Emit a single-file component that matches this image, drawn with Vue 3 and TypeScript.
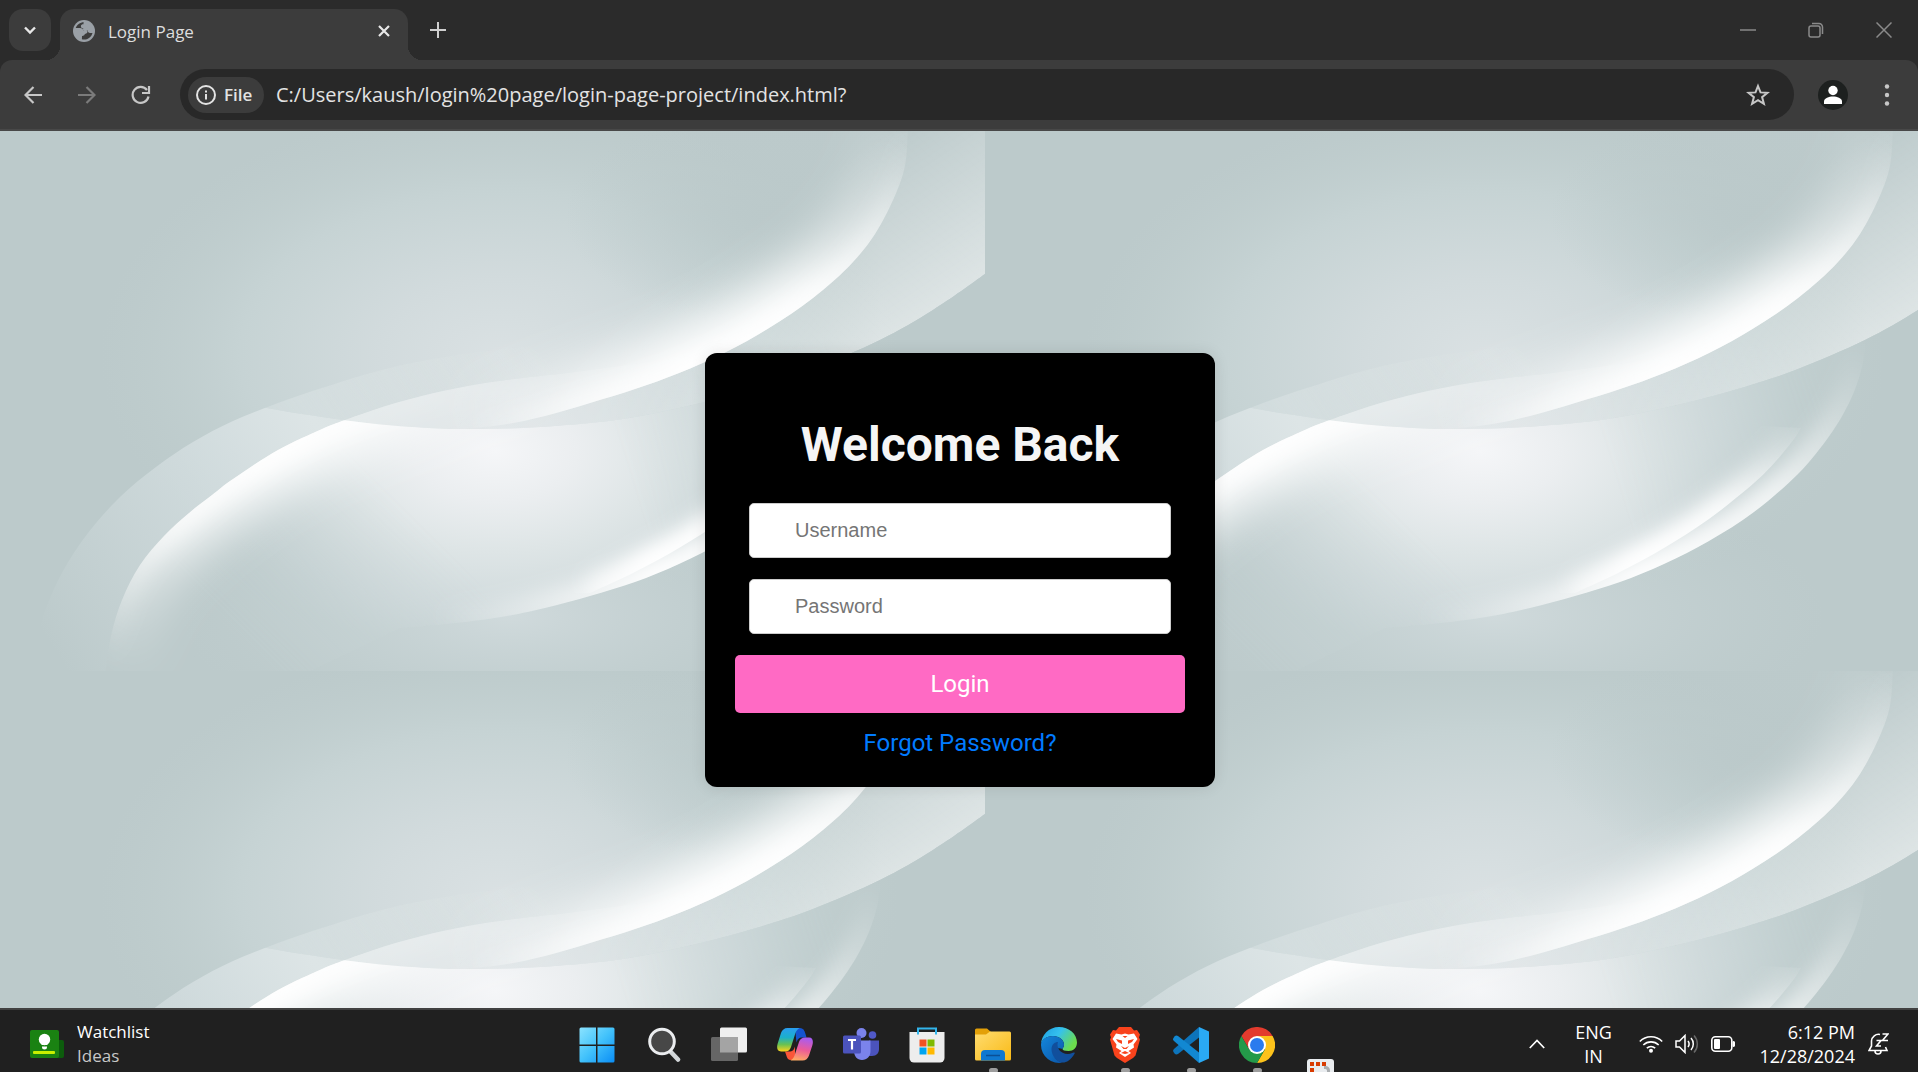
<script setup lang="ts">
import { ref } from 'vue'

type Point = [number, number]

const username = ref('')
const password = ref('')

/** Smooth cubic path through a list of points. */
function curve(points: Point[], start = 'M'): string {
  let d = `${start}${points[0][0]} ${points[0][1]}`
  for (let i = 0; i < points.length - 1; i++) {
    const before = points[Math.max(i - 1, 0)]
    const from = points[i]
    const to = points[i + 1]
    const after = points[Math.min(i + 2, points.length - 1)]
    const c1 = [from[0] + (to[0] - before[0]) / 6, from[1] + (to[1] - before[1]) / 6]
    const c2 = [to[0] - (after[0] - from[0]) / 6, to[1] - (after[1] - from[1]) / 6]
    d += `C${c1[0].toFixed(1)} ${c1[1].toFixed(1)} ${c2[0].toFixed(1)} ${c2[1].toFixed(1)} ${to[0]} ${to[1]}`
  }
  return d
}

const crest: Point[] = [[909, -30], [908, 0], [903, 43], [881, 93], [853, 131], [813, 167], [769, 197], [724, 222], [679, 242], [635, 258], [590, 272], [545, 285], [501, 294], [440, 300]]
const swell: Point[] = [[1000, 131], [985, 143], [933, 179], [880, 209], [813, 238], [769, 253], [724, 266], [679, 277], [635, 286], [590, 292], [523, 297], [456, 298], [412, 296], [367, 292], [322, 286], [278, 279], [233, 270], [191, 259], [110, 238]]
const outerLeft: Point[] = [[30, 545], [34, 520], [45, 480], [63, 440], [88, 402], [120, 366], [156, 336], [193, 311], [233, 290], [278, 272], [322, 257], [367, 243], [412, 232], [465, 223], [530, 215]]
const innerLeft: Point[] = [[105, 545], [111, 505], [122, 469], [140, 434], [164, 405], [189, 382], [212, 364], [233, 348], [278, 319], [322, 298], [345, 289], [389, 274], [434, 262], [479, 253], [523, 247], [560, 243]]
const lowerRight: Point[] = [[881, 200], [880, 217], [876, 240], [865, 270], [845, 304], [813, 343], [769, 381], [724, 410], [679, 433], [635, 451], [590, 465], [545, 477], [501, 486], [447, 493], [400, 497]]
const innerRight: Point[] = [[816, 297], [809, 308], [791, 330], [769, 352], [724, 388], [679, 417], [635, 441], [590, 462]]

const crestLine = curve(crest)
const crestArea = crestLine + 'L440 -20Z'
const swellLine = curve(swell)
const aboveSwell = swellLine + 'L0 238L0 -20L1000 -20Z'
const belowSwell = swellLine + 'L0 200L0 560L1000 560Z'
const band = curve(outerLeft) + 'L560 243' + curve([...innerLeft].reverse(), 'L') + 'Z'
const leafLine = curve(innerLeft)
const leafArea = leafLine + 'L881 200' + curve(lowerRight, 'L') + 'L300 545Z'
const rimLine = curve(lowerRight)
const rimArea = rimLine + 'L420 215Z'
const innerRim = curve(innerRight)
const innerRimArea = innerRim + 'L480 462L480 280Z'
</script>

<template>
  <div class="desktop">
    <header class="titlebar">
      <button class="tab-search" aria-label="Search tabs">
        <svg width="14" height="14" viewBox="0 0 14 14"><path d="M2 4.5 7 9.5 12 4.5" fill="none" stroke="#e8e8e8" stroke-width="2.4" /></svg>
      </button>
      <div class="tab">
        <svg width="22" height="22" viewBox="0 0 22 22">
          <circle cx="11" cy="11" r="11" fill="#9aa0a6" />
          <path d="M11 2.200C7 2.200 3.900 4.600 2.700 8.100h4.200c2.300 0 3.200 1 3.400 2.300h2.900c1.400 0 1.700 1.700.7 2.600-.8.700-2 .5-2.300 1.600-.4 1.300-1.900 1.400-2.600 1.300l-.1 3.400c4.900 1.200 9.500-2 10.600-6.400h-2.800c-1.300 0-2-1-2-2.300h-3.400c-1.500-.1-1.700-1.700-.8-2.300-1.500.1-2.800-.6-2.600-2.300.1-1.400 1.300-1.900 2.600-1.800V2.700z" fill="#3c3c3c" />
        </svg>
        <span class="tab-title">Login Page</span>
        <button class="bare" aria-label="Close tab">
          <svg width="14" height="14" viewBox="0 0 14 14"><path d="M2 2 12 12M12 2 2 12" stroke="#e8e8e8" stroke-width="2.200" /></svg>
        </button>
      </div>
      <button class="bare new-tab" aria-label="New tab">
        <svg width="16" height="16" viewBox="0 0 16 16"><path d="M8 0V16M0 8H16" stroke="#d0d0d0" stroke-width="2" /></svg>
      </button>
      <div class="window-controls">
        <button class="bare" aria-label="Minimize">
          <svg width="16" height="16" viewBox="0 0 16 16"><path d="M0 8H16" stroke="#8a8a8a" stroke-width="1.500" /></svg>
        </button>
        <button class="bare" aria-label="Restore">
          <svg width="16" height="16" viewBox="0 0 16 16" fill="none" stroke="#8a8a8a" stroke-width="1.500"><rect x="1" y="4" width="11" height="11" rx="2" /><path d="M4 1.500H11a3.500 3.500 0 0 1 3.500 3.500V12" /></svg>
        </button>
        <button class="bare" aria-label="Close">
          <svg width="16" height="16" viewBox="0 0 16 16"><path d="M.5.5 15.500 15.500M15.500.5.5 15.500" stroke="#8a8a8a" stroke-width="1.500" /></svg>
        </button>
      </div>
    </header>

    <nav class="toolbar">
      <button class="bare nav-button" aria-label="Back">
        <svg width="18" height="18" viewBox="0 0 18 18"><path d="M18 9H2M9.500 1 1.500 9 9.500 17" fill="none" stroke="#c7c7c7" stroke-width="2.200" /></svg>
      </button>
      <button class="bare nav-button" aria-label="Forward">
        <svg width="18" height="18" viewBox="0 0 18 18"><path d="M0 9H16M8.500 1 16.500 9 8.500 17" fill="none" stroke="#7b7b7b" stroke-width="2.200" /></svg>
      </button>
      <button class="bare nav-button" aria-label="Reload">
        <svg width="20" height="20" viewBox="0 0 20 20"><path d="M17.500 11.500A8 8 0 1 1 16 5" fill="none" stroke="#c7c7c7" stroke-width="2.200" /><path d="M18 1V8H11" fill="none" stroke="#c7c7c7" stroke-width="2.200" /></svg>
      </button>
      <div class="address">
        <button class="file-chip">
          <svg width="20" height="20" viewBox="0 0 20 20"><circle cx="10" cy="10" r="9" fill="none" stroke="#e3e3e3" stroke-width="2" /><path d="M9 9h2v5.500H9zM9 5.500h2v2H9z" fill="#e3e3e3" /></svg>
          <span>File</span>
        </button>
        <input class="url" aria-label="Address" value="C:/Users/kaush/login%20page/login-page-project/index.html?" />
        <button class="bare" aria-label="Bookmark this page">
          <svg width="24" height="24" viewBox="0 0 24 24"><path d="m12 3 2.500 6.400 6.900.4-5.300 4.300 1.800 6.700L12 17.100l-5.900 3.700 1.800-6.700-5.300-4.300 6.900-.4z" fill="none" stroke="#c7c7c7" stroke-width="2" /></svg>
        </button>
      </div>
      <button class="bare avatar" aria-label="Profile">
        <svg width="30" height="30" viewBox="0 0 30 30"><circle cx="15" cy="15" r="15" fill="#1d201f" /><circle cx="15" cy="10.500" r="4.700" fill="#fff" /><path d="M6 24v-2.500c0-3.500 5-5 9-5s9 1.500 9 5V24z" fill="#fff" /></svg>
      </button>
      <button class="bare menu" aria-label="Browser menu">
        <svg width="6" height="24" viewBox="0 0 6 24" fill="#c7c7c7"><circle cx="3" cy="3.500" r="2.200" /><circle cx="3" cy="12" r="2.200" /><circle cx="3" cy="20.500" r="2.200" /></svg>
      </button>
    </nav>

    <main class="page">
      <svg class="backdrop" width="100%" height="100%" aria-hidden="true">
        <defs>
          <radialGradient id="glow" gradientUnits="userSpaceOnUse" cx="0" cy="0" r="1" gradientTransform="translate(500 225) scale(400 255)">
            <stop offset="0" stop-color="#dae1e3" />
            <stop offset=".3" stop-color="#d2dbdd" />
            <stop offset=".65" stop-color="#c6d3d4" />
            <stop offset="1" stop-color="#c0cece" stop-opacity="0" />
          </radialGradient>
          <radialGradient id="shade" gradientUnits="userSpaceOnUse" cx="0" cy="0" r="1" gradientTransform="translate(775 85) scale(210 110)">
            <stop offset="0" stop-color="#bbc9ca" />
            <stop offset=".5" stop-color="#bbc9ca" stop-opacity=".5" />
            <stop offset="1" stop-color="#bbc9ca" stop-opacity="0" />
          </radialGradient>
          <radialGradient id="foot" gradientUnits="userSpaceOnUse" cx="0" cy="0" r="1" gradientTransform="translate(510 485) scale(330 130)">
            <stop offset="0" stop-color="#d0dadc" />
            <stop offset="1" stop-color="#c4d1d2" stop-opacity="0" />
          </radialGradient>
          <radialGradient id="heart" gradientUnits="userSpaceOnUse" cx="0" cy="0" r="1" gradientTransform="translate(495 320) scale(330 200)">
            <stop offset="0" stop-color="#f5f6f8" />
            <stop offset=".25" stop-color="#ebeef0" />
            <stop offset=".5" stop-color="#dee5e6" />
            <stop offset=".8" stop-color="#d0dadc" />
            <stop offset="1" stop-color="#c5d2d3" />
          </radialGradient>
          <linearGradient id="bandFill" gradientUnits="userSpaceOnUse" x1="60" y1="530" x2="540" y2="220">
            <stop offset="0" stop-color="#d5dfe1" stop-opacity="0" />
            <stop offset=".4" stop-color="#d5dfe1" stop-opacity=".8" />
            <stop offset=".6" stop-color="#dde5e6" />
            <stop offset="1" stop-color="#dde5e4" stop-opacity=".2" />
          </linearGradient>
          <linearGradient id="crestInk" gradientUnits="userSpaceOnUse" x1="905" y1="0" x2="470" y2="295">
            <stop offset="0" stop-color="#fff" stop-opacity="0" />
            <stop offset=".15" stop-color="#fff" stop-opacity=".45" />
            <stop offset=".35" stop-color="#fff" stop-opacity=".95" />
            <stop offset=".6" stop-color="#fff" />
            <stop offset=".78" stop-color="#fff" stop-opacity=".7" />
            <stop offset="1" stop-color="#fff" stop-opacity="0" />
          </linearGradient>
          <linearGradient id="leafInk" gradientUnits="userSpaceOnUse" x1="110" y1="530" x2="540" y2="245">
            <stop offset="0" stop-color="#fff" stop-opacity="0" />
            <stop offset=".25" stop-color="#fff" stop-opacity=".75" />
            <stop offset=".5" stop-color="#fff" />
            <stop offset=".75" stop-color="#fff" stop-opacity=".8" />
            <stop offset="1" stop-color="#fff" stop-opacity="0" />
          </linearGradient>
          <linearGradient id="rimInk" gradientUnits="userSpaceOnUse" x1="880" y1="220" x2="440" y2="495">
            <stop offset="0" stop-color="#fff" stop-opacity="0" />
            <stop offset=".3" stop-color="#fff" stop-opacity=".8" />
            <stop offset=".6" stop-color="#fff" />
            <stop offset="1" stop-color="#fff" stop-opacity="0" />
          </linearGradient>
          <linearGradient id="innerRimInk" gradientUnits="userSpaceOnUse" x1="820" y1="290" x2="580" y2="465">
            <stop offset="0" stop-color="#fff" stop-opacity="0" />
            <stop offset=".4" stop-color="#fff" stop-opacity=".9" />
            <stop offset=".75" stop-color="#fff" />
            <stop offset="1" stop-color="#fff" stop-opacity=".3" />
          </linearGradient>
          <linearGradient id="swellFill" gradientUnits="userSpaceOnUse" x1="860" y1="20" x2="960" y2="170">
            <stop offset="0" stop-color="#fff" stop-opacity="0" />
            <stop offset="1" stop-color="#fff" stop-opacity=".52" />
          </linearGradient>
          <linearGradient id="swellFade" gradientUnits="userSpaceOnUse" x1="560" y1="0" x2="880" y2="0">
            <stop offset="0" stop-color="#fff" stop-opacity=".15" />
            <stop offset="1" stop-color="#fff" />
          </linearGradient>
          <linearGradient id="leafFadeInk" gradientUnits="userSpaceOnUse" x1="840" y1="250" x2="620" y2="320">
            <stop offset="0" stop-color="#000" />
            <stop offset="1" stop-color="#fff" />
          </linearGradient>
          <linearGradient id="leafFootInk" gradientUnits="userSpaceOnUse" x1="250" y1="520" x2="400" y2="370">
            <stop offset="0" stop-color="#000" />
            <stop offset="1" stop-color="#000" stop-opacity="0" />
          </linearGradient>
          <mask id="leafFade" maskUnits="userSpaceOnUse" x="0" y="0" width="985" height="540">
            <rect width="985" height="540" fill="url(#leafFadeInk)" />
            <rect width="985" height="540" fill="url(#leafFootInk)" />
          </mask>
          <mask id="swellMask" maskUnits="userSpaceOnUse" x="0" y="0" width="985" height="540">
            <rect width="985" height="540" fill="url(#swellFade)" />
          </mask>
          <filter id="soft" filterUnits="userSpaceOnUse" x="-60" y="-60" width="1100" height="660"><feGaussianBlur stdDeviation="23" /></filter>
          <filter id="softer" filterUnits="userSpaceOnUse" x="-60" y="-60" width="1100" height="660"><feGaussianBlur stdDeviation="10" /></filter>
          <clipPath id="crestClip"><path :d="crestArea" /></clipPath>
          <clipPath id="aboveClip"><path :d="aboveSwell" /></clipPath>
          <clipPath id="belowClip"><path :d="belowSwell" /></clipPath>
          <clipPath id="leafClip"><path :d="leafArea" /></clipPath>
          <clipPath id="rimClip"><path :d="rimArea" /></clipPath>
          <clipPath id="innerRimClip"><path :d="innerRimArea" /></clipPath>
          <g id="leaf">
            <path :d="band" fill="url(#bandFill)" />
            <g clip-path="url(#leafClip)">
              <path :d="leafArea" fill="url(#heart)" mask="url(#leafFade)" />
              <path :d="leafLine" fill="none" stroke="url(#leafInk)" stroke-width="74" filter="url(#soft)" />
              <path :d="leafLine" fill="none" stroke="url(#leafInk)" stroke-width="22" filter="url(#softer)" />
            </g>
          </g>
          <pattern id="waves" patternUnits="userSpaceOnUse" width="985" height="540">
            <rect width="985" height="540" fill="#bccacb" />
            <rect width="985" height="540" fill="url(#glow)" />
            <rect width="985" height="540" fill="url(#foot)" />
            <g clip-path="url(#belowClip)">
              <use href="#leaf" />
              <g clip-path="url(#rimClip)">
                <path :d="rimLine" fill="none" stroke="url(#rimInk)" stroke-width="34" filter="url(#softer)" />
              </g>
              <g clip-path="url(#innerRimClip)">
                <path :d="innerRim" fill="none" stroke="url(#innerRimInk)" stroke-width="34" filter="url(#softer)" />
              </g>
            </g>
            <g clip-path="url(#aboveClip)">
              <use href="#leaf" opacity=".5" />
              <path :d="aboveSwell" fill="url(#swellFill)" mask="url(#swellMask)" />
            </g>
            <g clip-path="url(#crestClip)">
              <rect x="500" width="485" height="300" fill="url(#shade)" />
              <path :d="crestLine" fill="none" stroke="url(#crestInk)" stroke-width="80" filter="url(#soft)" />
              <path :d="crestLine" fill="none" stroke="url(#crestInk)" stroke-width="20" filter="url(#softer)" />
            </g>
          </pattern>
        </defs>
        <rect width="100%" height="100%" fill="url(#waves)" />
      </svg>

      <form class="card" @submit.prevent>
        <h1>Welcome Back</h1>
        <input v-model="username" class="field" type="text" placeholder="Username" aria-label="Username" />
        <input v-model="password" class="field" type="password" placeholder="Password" aria-label="Password" />
        <button class="login" type="submit">Login</button>
        <a class="forgot" href="#">Forgot Password?</a>
      </form>
    </main>

    <footer class="taskbar">
      <button class="bare widget">
        <svg width="34" height="28" viewBox="0 0 34 28">
          <rect x="22" y="10" width="12" height="18" rx="2" fill="#0c5c0c" />
          <rect width="29" height="28" rx="2" fill="#1a8212" />
          <circle cx="14.500" cy="9.500" r="5.700" fill="#fff" /><path d="M11.500 13h6v2h-6zM12 16.500h5V17a2 2 0 0 1-5 0z" fill="#fff" />
          <rect x="3" y="21" width="22" height="3" rx="1" fill="#c8f000" />
        </svg>
        <span class="widget-text"><span>Watchlist</span><span class="muted">Ideas</span></span>
      </button>

      <div class="apps">
        <button class="bare app" aria-label="Start">
          <svg width="36" height="36" viewBox="0 0 36 36">
            <defs><linearGradient id="win" x1="0" y1="0" x2="1" y2="1"><stop offset="0" stop-color="#8be3ff" /><stop offset=".5" stop-color="#42c2fb" /><stop offset="1" stop-color="#0a8df5" /></linearGradient></defs>
            <path d="M2 .5h15v17H.5V2A1.500 1.500 0 0 1 2 .5zM18.500.5H34A1.500 1.500 0 0 1 35.500 2v15.500h-17zM.5 19H17v16.500H2A1.500 1.500 0 0 1 .5 34zM18.500 19h17v15a1.500 1.500 0 0 1-1.500 1.500H18.500z" fill="url(#win)" />
          </svg>
        </button>
        <button class="bare app" aria-label="Search">
          <svg width="36" height="36" viewBox="0 0 36 36"><path d="m25 24 8 8.500" stroke="#d3d7da" stroke-width="4.500" stroke-linecap="round" /><circle cx="17" cy="14.500" r="12.300" fill="#474747" stroke="#ebedef" stroke-width="3" /></svg>
        </button>
        <button class="bare app" aria-label="Task view">
          <svg width="36" height="36" viewBox="0 0 36 36"><rect x="9" y=".5" width="27" height="25" rx="1.500" fill="#efefef" /><rect x="0" y="10" width="27" height="24" rx="1.500" fill="#666" /><path d="M9 10h18v15.500H9z" fill="#a4a4a4" /></svg>
        </button>
        <button class="bare app" aria-label="Copilot">
          <svg width="36" height="36" viewBox="0 0 36 36">
            <defs>
              <linearGradient id="copA" x1="0" y1="0" x2="0" y2="1"><stop offset="0" stop-color="#2a9df0" /><stop offset=".4" stop-color="#1bb0cb" /><stop offset=".7" stop-color="#68c153" /><stop offset="1" stop-color="#ffd31a" /></linearGradient>
              <linearGradient id="copB" x1=".5" y1="0" x2=".3" y2="1"><stop offset="0" stop-color="#a95cf0" /><stop offset=".5" stop-color="#ec5b98" /><stop offset="1" stop-color="#ffab63" /></linearGradient>
            </defs>
            <path d="M18 1h5c3 0 4.500 2 5.500 6l1 3.500h-4c-4 0-5 2-6 5z" fill="#1554d0" />
            <path d="M18 33h-4c-3 0-4-2-4.800-5L8 24.500h4c4 0 5-2 6-5z" fill="#fa5639" />
            <path d="M10.500 1h12c-3 1.500-4 4.500-5 8l-3.500 11c-1 3-3 4.500-6 4.500H4c-4 0-4.500-4-3.300-8L4 6c1-3 3.300-5 6.500-5z" fill="url(#copA)" />
            <path d="M25.500 33.500h-12c3-1.500 4-4.500 5-8L22 15c1-3 3-4.500 6-4.500h4c4 0 4.500 4 3.300 8L32 28.500c-1 3-3.300 5-6.500 5z" fill="url(#copB)" />
          </svg>
        </button>
        <button class="bare app" aria-label="Teams">
          <svg width="36" height="36" viewBox="0 0 36 36">
            <circle cx="29.500" cy="8" r="3.800" fill="#5059c9" /><path d="M26 13.500h10V22c0 4-2.500 7-7 7h-3z" fill="#4b53bc" />
            <circle cx="18.500" cy="6" r="5" fill="#7b83eb" /><path d="M11 13.500h16.500V24c0 5.500-3.500 9-8.500 9s-8-4-8-9z" fill="#7b83eb" />
            <rect y="8.500" width="18" height="18" rx="1.500" fill="#4b53bc" /><path d="M5 13h8M9 13v9.500" stroke="#fff" stroke-width="2.200" />
          </svg>
        </button>
        <button class="bare app" aria-label="Microsoft Store">
          <svg width="36" height="36" viewBox="0 0 36 36">
            <path d="M.5 5h35v26a4.500 4.500 0 0 1-4.500 4.500H5A4.500 4.500 0 0 1 .5 31z" fill="#ededed" />
            <path d="M9 7.500V1.500h18v6" fill="none" stroke="#32b5ec" stroke-width="2" />
            <path d="M10.500 12.500h7v7h-7z" fill="#f25022" /><path d="M18.500 12.500h7v7h-7z" fill="#7fba00" /><path d="M10.500 20.500h7v7h-7z" fill="#00a4ef" /><path d="M18.500 20.500h7v7h-7z" fill="#ffb900" />
          </svg>
        </button>
        <button class="bare app open" aria-label="File Explorer">
          <svg width="36" height="36" viewBox="0 0 36 36">
            <defs><linearGradient id="folder" x1="0" y1="0" x2="1" y2="1"><stop offset="0" stop-color="#ffdc70" /><stop offset="1" stop-color="#f9ba16" /></linearGradient></defs>
            <path d="M0 3a1.500 1.500 0 0 1 1.500-1.500H12L16 5v8H0z" fill="#e3a008" />
            <path d="M0 7.500h11L15 4.500h19.500A1.500 1.500 0 0 1 36 6v26a1.500 1.500 0 0 1-1.500 1.500h-33A1.500 1.500 0 0 1 0 32z" fill="url(#folder)" />
            <path d="M6 33.500V27a4 4 0 0 1 4-4h16a4 4 0 0 1 4 4v6.500z" fill="#0f78d0" /><path d="M11 28.500h14" stroke="#0b4f95" stroke-width="1.500" />
          </svg>
        </button>
        <button class="bare app" aria-label="Edge">
          <svg width="36" height="36" viewBox="0 0 36 36">
            <defs>
              <linearGradient id="edgeTop" x1="0" y1="0" x2="1" y2=".5"><stop offset="0" stop-color="#1b9de2" /><stop offset=".5" stop-color="#35c1ee" /><stop offset="1" stop-color="#6bdc4d" /></linearGradient>
              <linearGradient id="edgeLow" x1="0" y1="0" x2="1" y2="1"><stop offset="0" stop-color="#1387dc" /><stop offset="1" stop-color="#0b55a7" /></linearGradient>
            </defs>
            <path d="M0 18C0 8 8 0 18 0s18 7 18 15.500c0 5-3.500 8.500-8.500 8.500-4 0-6-1-6-2 0-1 1.500-1.700 1.500-4.500C23 13 18 9 12 9 5.500 9 0 13 0 18z" fill="url(#edgeTop)" />
            <path d="M0 18C0 12.500 5.500 9 12 9c6 0 11 4 11 8.500 0 2.800-1.500 3.500-1.500 4.500-4-2-9 0-9 3.500 0 5 5 9.500 9.500 10A18 18 0 0 1 0 18z" fill="url(#edgeLow)" />
            <path d="M10.500 22c0-4.500 3.500-7 6.500-7-2 5 2 12 10 12 3 0 4.500-1.500 6-1.500.8 0 .9.7.4 1.500C30 33 25.500 35.500 22 35.500 16 35.500 10.500 29 10.500 22z" fill="#114f9c" />
          </svg>
        </button>
        <button class="bare app open" aria-label="Brave">
          <svg width="36" height="36" viewBox="0 0 36 36">
            <path d="M12 0h12l3 3.500 3-.5 3 4.500-1 3 1 2-4.500 16L26 31l-8 5-8-5-2.500-2.500L3 12.500l1-2-1-3L6 3l3 .5z" fill="#f9431c" />
            <path d="M9 6.500 14.500 7.500 18 6.500 21.500 7.500 27 6.500 30.500 12 26.500 17.500 27 20.500 21.500 24 24 26 18 30 12 26 14.500 24 9 20.500 9.500 17.500 5.500 12z" fill="#fff" />
            <path d="m9 12 6 1.500v3.500l-4-2zM27 12l-6 1.500v3.500l4-2zM14 19l4 2 4-2-2.500 3h-3zM15.500 9h5L18 11zM14 26l4-2 4 2-4 1z" fill="#f9431c" />
          </svg>
        </button>
        <button class="bare app open" aria-label="Visual Studio Code">
          <svg width="36" height="36" viewBox="0 0 36 36">
            <path d="M26 10.500 5 27Q3 28 1.500 26.500L.5 25Q-.5 23.500 1 22L26 0z" fill="#0d74bb" />
            <path d="M26 25.500 5 9Q3 8 1.500 9.500L.5 11Q-.5 12.500 1 14L26 36z" fill="#1288d2" />
            <path d="M26 0 36 4.500V31.500L26 36z" fill="#2aa9f3" />
          </svg>
        </button>
        <button class="bare app open" aria-label="Chrome">
          <svg width="36" height="36" viewBox="0 0 36 36">
            <path d="M2.400 9A18 18 0 0 1 33.600 9H18l-7.800 13.500z" fill="#e33b2e" />
            <path d="M33.600 9A18 18 0 0 1 18 36l7.800-13.500L18 9z" fill="#fcc21b" />
            <path d="M18 36A18 18 0 0 1 2.400 9l7.800 13.500h15.600z" fill="#249a49" />
            <circle cx="18" cy="18" r="9" fill="#fff" /><circle cx="18" cy="18" r="7" fill="#2b7bee" />
          </svg>
        </button>
        <button class="bare app rising" aria-label="Snipping Tool">
          <svg width="27" height="13" viewBox="0 0 27 13">
            <path d="M0 13V3a3 3 0 0 1 3-3h21a3 3 0 0 1 3 3v10z" fill="#e9ecef" />
            <path d="M17 8.500h1.500a3 3 0 0 1 3 3V13" fill="none" stroke="#a9adb0" stroke-width="3" />
            <path d="M3 3h4v4H3zM9 3h4v4H9zM15 3h4v4h-4zM3 9h4v4H3z" fill="#d83b01" />
          </svg>
        </button>
      </div>

      <div class="tray">
        <button class="bare" aria-label="Show hidden icons">
          <svg width="16" height="10" viewBox="0 0 16 10"><path d="m.8 9 7.200-7.500L15.200 9" fill="none" stroke="#fff" stroke-width="1.700" /></svg>
        </button>
        <button class="bare language"><span>ENG</span><span>IN</span></button>
        <button class="bare status" aria-label="Network, volume and battery">
          <svg width="24" height="18" viewBox="0 0 24 18" fill="none" stroke="#fff" stroke-width="1.600"><path d="M.8 6.500a15.500 15.500 0 0 1 22.400 0M4.300 10a11 11 0 0 1 15.400 0M7.800 13.200a6.500 6.500 0 0 1 8.400 0" /><circle cx="12" cy="15.700" r="2" fill="#fff" stroke="none" /></svg>
          <svg width="24" height="20" viewBox="0 0 24 20" fill="none" stroke="#fff" stroke-width="1.500"><path d="M1 7h3.500L10 1.500v17L4.500 13H1zM13 7a5 5 0 0 1 0 6M16 4a9 9 0 0 1 0 12" /><path d="M19 1.500a12.500 12.500 0 0 1 0 17" stroke="#686868" /></svg>
          <svg width="24" height="16" viewBox="0 0 24 16"><rect x=".8" y=".8" width="20" height="14.400" rx="3.500" fill="none" stroke="#fff" stroke-width="1.600" /><rect x="3" y="3" width="6" height="10" rx="1" fill="#fff" /><path d="M22 5.500a2.500 2.500 0 0 1 0 5z" fill="#fff" stroke="#fff" /></svg>
        </button>
        <button class="bare clock"><span>6:12 PM</span><span>12/28/2024</span></button>
        <button class="bare" aria-label="Notifications">
          <svg width="21" height="22" viewBox="0 0 21 22" fill="none" stroke="#fff" stroke-width="1.600"><path d="M12 1.500A7 7 0 0 0 3.500 8v5L1 17.500h18L17.500 14M7 18a3 3 0 0 0 6 0M8.500 7.500H13L8.500 13H13M14.500 1H20l-5.500 6.500H20" /></svg>
        </button>
      </div>
    </footer>
  </div>
</template>

<style>
body { margin: 0; background: #202020; }
</style>

<style scoped>
* { box-sizing: border-box; }
.desktop { display: flex; flex-direction: column; min-height: 100vh; font-family: "Open Sans", "Noto Sans", sans-serif; background: #2b2b2b; }
button { font: inherit; cursor: default; }
.bare { border: 0; padding: 0; background: none; color: inherit; display: flex; align-items: center; justify-content: center; }
svg { display: block; flex: none; }

.titlebar { display: flex; height: 60px; padding-left: 9px; background: #2b2b2b; }
.tab-search { width: 42px; height: 42px; margin: 9px 9px 0 0; padding: 0; border: 0; border-radius: 14px; background: #3c3c3c; display: flex; align-items: center; justify-content: center; }
.tab { position: relative; display: flex; align-items: center; width: 348px; height: 51px; margin-top: 9px; padding: 0 17px 8px 13px; border-radius: 14px 14px 0 0; background: #3c3c3c; }
.tab::before, .tab::after { content: ""; position: absolute; bottom: 0; width: 14px; height: 14px; }
.tab::before { right: 100%; background: radial-gradient(circle at 0 0, transparent 14px, #3c3c3c 14px); }
.tab::after { left: 100%; background: radial-gradient(circle at 100% 0, transparent 14px, #3c3c3c 14px); }
.tab-title { flex: 1; padding: 3px 0 0 13px; font-size: 17px; line-height: 24px; color: #dedede; }
.new-tab { width: 60px; }
.window-controls { display: flex; margin-left: auto; }
.window-controls button { width: 68px; }

.toolbar { display: flex; align-items: center; height: 71px; padding: 0 16px 0 6px; background: #3c3c3c; border-bottom: 2px solid #484848; border-radius: 12px 12px 0 0; }
.nav-button { width: 54px; height: 48px; }
.address { flex: 1; display: flex; align-items: center; height: 51px; margin-left: 12px; padding: 0 24px 0 8px; border-radius: 26px; background: #282828; }
.file-chip { display: flex; align-items: center; gap: 8px; width: 76px; height: 36px; padding: 0 0 0 8px; border: 0; border-radius: 18px; background: #3c3c3c; color: #e3e3e3; font-size: 17px; font-weight: 600; line-height: 24px; }
.url { flex: 1; min-width: 0; height: 36px; margin-left: 12px; padding: 0; border: 0; outline: 0; background: none; color: #e3e3e3; font-family: inherit; font-size: 20px; }
.avatar { width: 30px; margin-left: 24px; }
.menu { width: 30px; margin-left: 24px; }

.page { position: relative; flex: 1; display: flex; align-items: center; justify-content: center; padding: 24px 24px 24px 26px; }
.backdrop { position: absolute; inset: 0; }
.card { position: relative; display: flex; flex-direction: column; align-items: center; width: 510px; padding: 60px 30px 30px; border-radius: 12px; background: #000; box-shadow: 0 0 15px rgba(0, 0, 0, 0.1); font-family: Roboto, sans-serif; }
h1 { margin: 2px 0 28px; font-size: 48px; line-height: 60px; font-weight: 700; color: #f5f5f5; }
.field { width: 422px; height: 55px; margin-bottom: 21px; padding: 0 45px; border: 1px solid #ccc; border-radius: 5px; background: #fff; font-family: "Liberation Sans", Arial, sans-serif; font-size: 20px; }
.field::placeholder { color: #757575; }
.login { width: 100%; height: 58px; border: 0; border-radius: 5px; background: #ff6ac4; color: #fff; font-size: 24px; }
.forgot { margin-top: 16px; font-size: 24px; line-height: 28px; color: #007bff; text-decoration: none; }

.taskbar { display: grid; grid-template: 62px / 1fr auto 1fr; border-top: 2px solid #414141; background: #202020; color: #fff; font-size: 17px; line-height: 24px; }
.widget { justify-self: start; gap: 13px; padding: 6px 0 0 30px; }
.widget-text { display: flex; flex-direction: column; text-align: left; }
.muted { color: #c8c8c8; }
.apps { display: flex; padding-left: 2px; }
.app { position: relative; width: 66px; padding: 8px 0 0; }
.open::after { content: ""; position: absolute; bottom: -1px; width: 9px; height: 5px; border-radius: 3px; background: #9d9d9d; }
.rising { align-items: flex-end; padding: 0 6px 0 0; }
.tray { display: flex; align-items: center; justify-content: flex-end; padding: 6px 29px 0 0; font-size: 18px; }
.language, .clock { flex-direction: column; }
.language { width: 36px; margin: 0 28px 0 30px; }
.status { gap: 12px; }
.clock { align-items: flex-end; margin: 0 13px 0 24px; }
</style>
